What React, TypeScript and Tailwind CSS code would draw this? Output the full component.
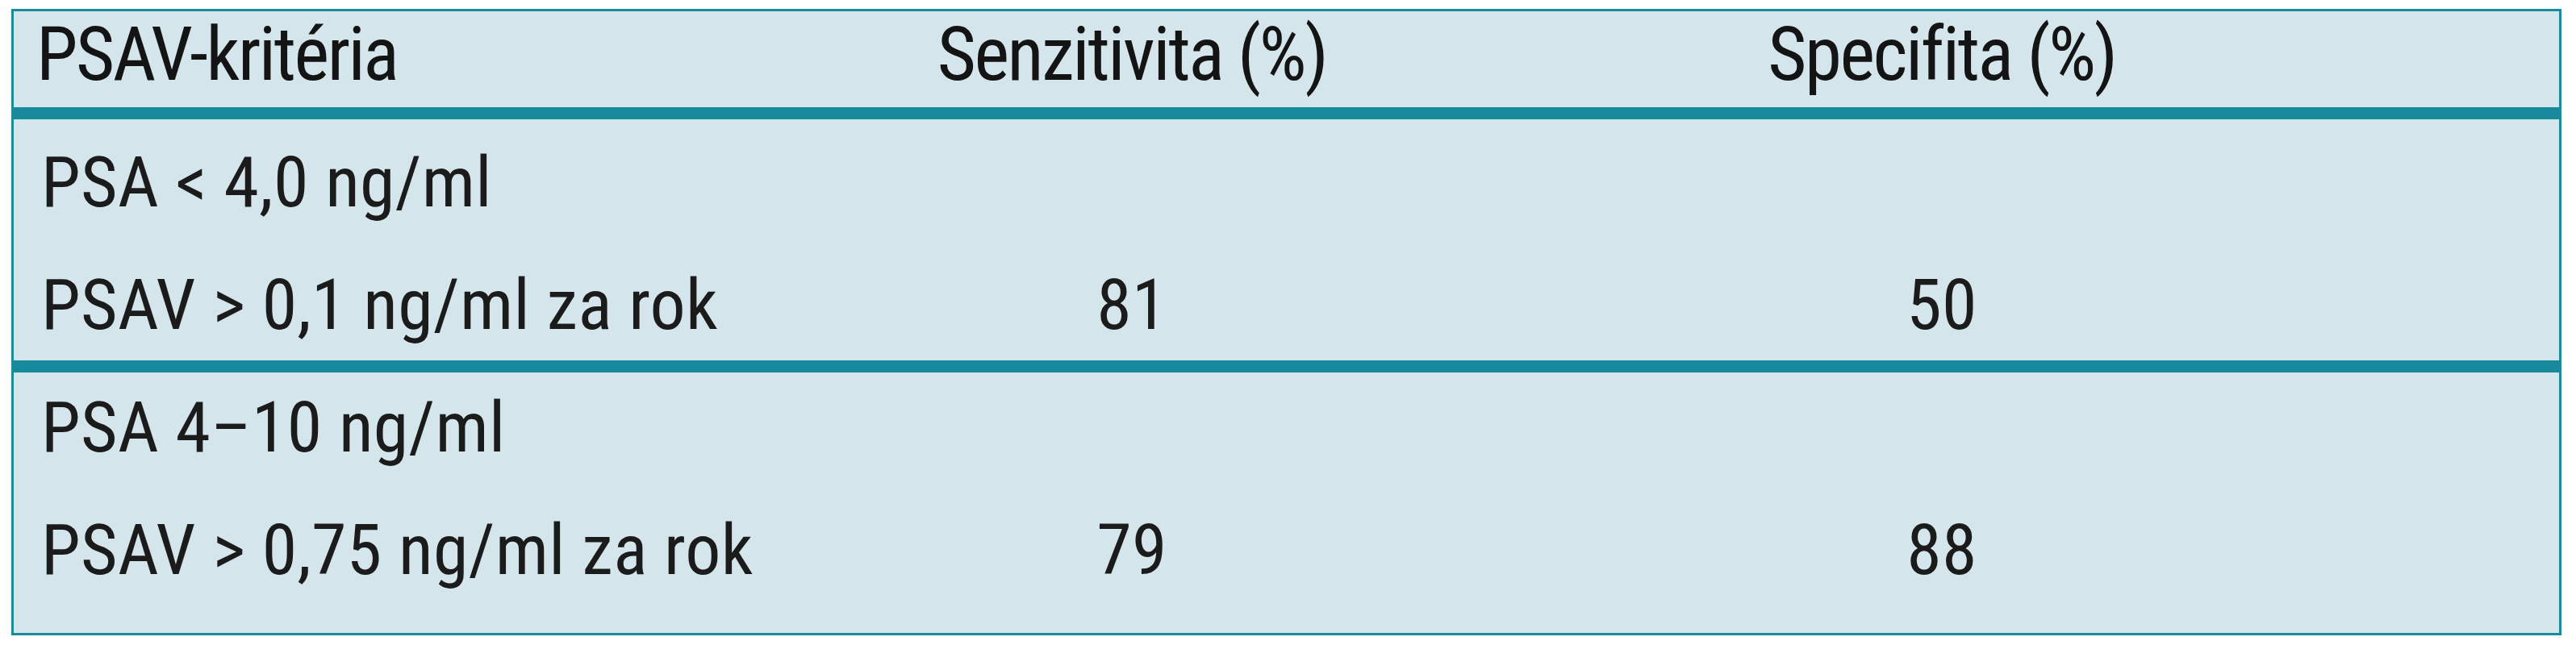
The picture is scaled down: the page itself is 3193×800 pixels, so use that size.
const ROWS = [
  {
    group: 'PSA < 4,0 ng/ml',
    rule: 'PSAV > 0,1 ng/ml za rok',
    sensitivity: '81',
    specificity: '50',
  },
  {
    group: 'PSA 4–10 ng/ml',
    rule: 'PSAV > 0,75 ng/ml za rok',
    sensitivity: '79',
    specificity: '88',
  },
];

const cols = 'grid grid-cols-[886px_1000px_1008px_1fr]';
const body = 'text-[88px] leading-[100px] tracking-[0.3px] font-normal [font-stretch:75%] whitespace-nowrap';

export default function App() {
  return (
    <div className="w-[3193px] h-[800px] bg-white pt-[11px] pl-[14px] font-['Roboto',sans-serif] text-[#1b1b1b]">
      <div className="w-[3161px] h-[777px] flex flex-col border-[3px] border-[#1b8b9c] bg-[#d4e6eb]">
        {/* Header */}
        <div className={`${cols} h-[134px] border-b-[15px] border-[#168a9b] text-[93px] leading-[108px] tracking-[-2.5px] font-normal text-[#141414] [font-stretch:75%] whitespace-nowrap`}>
          <div className="pl-[28px]">PSAV-kritéria</div>
          <div className="text-center">Senzitivita (%)</div>
          <div className="text-center">Specifita (%)</div>
          <div />
        </div>

        {ROWS.map((row, i) => (
          <div
            key={row.rule}
            className={
              i === 0
                ? 'h-[314px] border-b-[15px] border-[#168a9b] pt-[28px] flex flex-col gap-[52px]'
                : 'flex-1 pt-[18px] flex flex-col gap-[52px]'
            }
          >
            <div className={`${cols} ${body}`}>
              <div className="pl-[34px]">{row.group}</div>
            </div>
            <div className={`${cols} ${body}`}>
              <div className="pl-[34px]">{row.rule}</div>
              <div className="text-center">{row.sensitivity}</div>
              <div className="text-center">{row.specificity}</div>
              <div />
            </div>
          </div>
        ))}
      </div>
    </div>
  );
}
